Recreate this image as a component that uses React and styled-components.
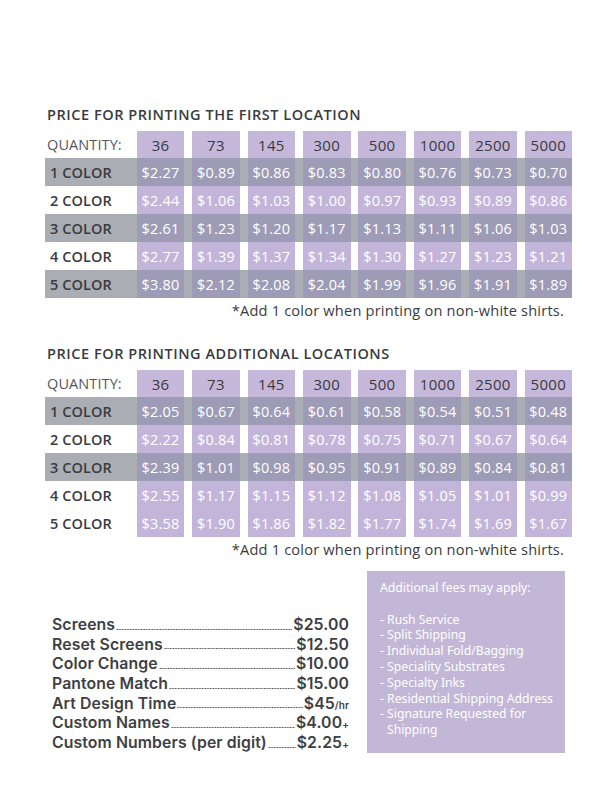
import styled, { createGlobalStyle } from "styled-components";

const GlobalStyle = createGlobalStyle`
  html, body {
    margin: 0;
    padding: 0;
    background: #ffffff;
  }
  body {
    font-family: "Open Sans", "Liberation Sans", sans-serif;
    color: #3a3b3f;
  }
`;

const QUANTITIES = ["36", "73", "145", "300", "500", "1000", "2500", "5000"];

const FIRST = [
  ["2.27", "0.89", "0.86", "0.83", "0.80", "0.76", "0.73", "0.70"],
  ["2.44", "1.06", "1.03", "1.00", "0.97", "0.93", "0.89", "0.86"],
  ["2.61", "1.23", "1.20", "1.17", "1.13", "1.11", "1.06", "1.03"],
  ["2.77", "1.39", "1.37", "1.34", "1.30", "1.27", "1.23", "1.21"],
  ["3.80", "2.12", "2.08", "2.04", "1.99", "1.96", "1.91", "1.89"],
];

const ADDITIONAL = [
  ["2.05", "0.67", "0.64", "0.61", "0.58", "0.54", "0.51", "0.48"],
  ["2.22", "0.84", "0.81", "0.78", "0.75", "0.71", "0.67", "0.64"],
  ["2.39", "1.01", "0.98", "0.95", "0.91", "0.89", "0.84", "0.81"],
  ["2.55", "1.17", "1.15", "1.12", "1.08", "1.05", "1.01", "0.99"],
  ["3.58", "1.90", "1.86", "1.82", "1.77", "1.74", "1.69", "1.67"],
];

const FEES = [
  { name: "Screens", price: "$25.00" },
  { name: "Reset Screens", price: "$12.50" },
  { name: "Color Change", price: "$10.00" },
  { name: "Pantone Match", price: "$15.00" },
  { name: "Art Design Time", price: "$45", unit: "/hr" },
  { name: "Custom Names", price: "$4.00", unit: "+" },
  { name: "Custom Numbers (per digit)", price: "$2.25", unit: "+" },
];

const EXTRAS = [
  "Rush Service",
  "Split Shipping",
  "Individual Fold/Bagging",
  "Speciality Substrates",
  "Specialty Inks",
  "Residential Shipping Address",
  "Signature Requested for Shipping",
];

function PriceTable({ title, rows, banded }) {
  return (
    <Section>
      <Title>{title}</Title>
      <Row $header>
        <QtyLabel>QUANTITY:</QtyLabel>
        {QUANTITIES.map((q) => (
          <HeadCell key={q}>{q}</HeadCell>
        ))}
      </Row>
      {rows.map((prices, i) => {
        const band = banded.includes(i + 1);
        return (
          <Row key={i} $band={band}>
            <RowLabel>{i + 1} COLOR</RowLabel>
            {prices.map((p, j) => (
              <PriceCell key={j} $band={band}>
                ${p}
              </PriceCell>
            ))}
          </Row>
        );
      })}
      <Note>*Add 1 color when printing on non-white shirts.</Note>
    </Section>
  );
}

export default function App() {
  return (
    <Page>
      <GlobalStyle />
      <PriceTable title="PRICE FOR PRINTING THE FIRST LOCATION" rows={FIRST} banded={[1, 3, 5]} />
      <Gap />
      <PriceTable title="PRICE FOR PRINTING ADDITIONAL LOCATIONS" rows={ADDITIONAL} banded={[1, 3]} />
      <Bottom>
        <FeeList>
          {FEES.map((f) => (
            <FeeRow key={f.name}>
              <FeeName>{f.name}</FeeName>
              <Dots />
              <FeePrice>
                {f.price}
                {f.unit && <Unit>{f.unit}</Unit>}
              </FeePrice>
            </FeeRow>
          ))}
        </FeeList>
        <ExtraBox>
          <ExtraTitle>Additional fees may apply:</ExtraTitle>
          <ExtraList>
            {EXTRAS.map((e) => (
              <ExtraItem key={e}>{e}</ExtraItem>
            ))}
          </ExtraList>
        </ExtraBox>
      </Bottom>
    </Page>
  );
}

const Page = styled.div`
  width: 520px;
  padding: 106px 0 0 45px;
`;

const Section = styled.div`
  display: flex;
  flex-direction: column;
`;

const Gap = styled.div`
  height: 26px;
`;

const Title = styled.div`
  font-size: 14.5px;
  line-height: 18px;
  font-weight: 600;
  color: #3a3b3f;
  padding-left: 2px;
  margin-bottom: 7px;
  letter-spacing: 0.55px;
`;

const Row = styled.div`
  display: grid;
  grid-template-columns: 84px repeat(8, 47.6px);
  column-gap: 7.8px;
  height: ${(p) => (p.$header ? "27px" : "28px")};
  background: ${(p) => (p.$band ? "#aaaeb4" : "#ffffff")};
`;

const QtyLabel = styled.div`
  display: flex;
  align-items: center;
  padding-left: 2px;
  font-size: 14.5px;
  color: #55575c;
  letter-spacing: 0.1px;
`;

const RowLabel = styled.div`
  display: flex;
  align-items: center;
  padding-left: 5px;
  font-size: 14.5px;
  font-weight: 600;
  color: #3a3b3f;
  letter-spacing: 0.1px;
`;

const HeadCell = styled.div`
  display: flex;
  align-items: center;
  justify-content: center;
  background: #c5b8da;
  font-size: 15px;
  font-weight: 500;
  color: #3a3b3f;
  letter-spacing: 0.3px;
`;

const PriceCell = styled.div`
  display: flex;
  align-items: center;
  justify-content: center;
  background: ${(p) => (p.$band ? "#9d9bb5" : "#c3b5da")};
  font-size: 14.5px;
  color: #ffffff;
  letter-spacing: 0.2px;
`;

const Note = styled.div`
  margin-top: 3px;
  text-align: right;
  font-size: 14.6px;
  line-height: 18px;
  color: #3a3b3f;
  padding-right: 1px;
  letter-spacing: 0.2px;
`;

const Bottom = styled.div`
  display: flex;
  justify-content: space-between;
  margin-top: 13px;
`;

const FeeList = styled.div`
  width: 304px;
  box-sizing: border-box;
  padding: 44px 0 0 7px;
  display: flex;
  flex-direction: column;
`;

const FeeRow = styled.div`
  display: flex;
  align-items: baseline;
  height: 19.7px;
  font-family: Inter, "Open Sans", sans-serif;
  font-size: 15.8px;
  line-height: 19.7px;
  font-weight: 600;
  color: #3d3f44;
  letter-spacing: 0.1px;
`;

const FeeName = styled.span`
  white-space: nowrap;
`;

const Dots = styled.span`
  flex: 1;
  align-self: stretch;
  margin: 0 1px 4px;
  background-image: radial-gradient(circle, #4a4c50 0.75px, transparent 1px);
  background-size: 2.7px 3px;
  background-repeat: repeat-x;
  background-position: left bottom;
`;

const FeePrice = styled.span`
  white-space: nowrap;
`;

const Unit = styled.span`
  font-size: 10px;
  font-weight: 600;
`;

const ExtraBox = styled.div`
  width: 198px;
  height: 182px;
  box-sizing: border-box;
  padding: 9px 10px 0 13px;
  background: #c2b7d6;
  color: #ffffff;
  font-family: "Noto Sans", "Open Sans", sans-serif;
  font-size: 12.2px;
  line-height: 15.8px;
`;

const ExtraTitle = styled.div`
  margin-bottom: 15.8px;
`;

const ExtraList = styled.ul`
  list-style: none;
  margin: 0;
  padding: 0;
`;

const ExtraItem = styled.li`
  padding-left: 7px;
  text-indent: -7px;
  &::before {
    content: "- ";
  }
`;
